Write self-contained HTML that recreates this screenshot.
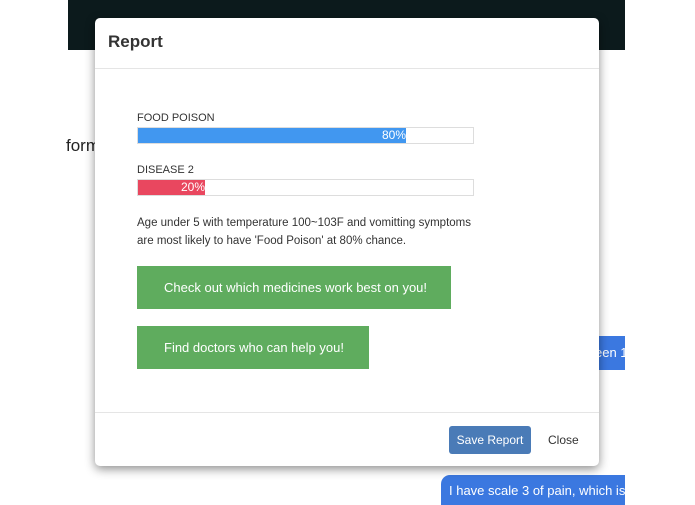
<!DOCTYPE html>
<html><head><style>
body{margin:0;width:695px;height:494px;overflow:hidden;background:#fff;font-family:"Liberation Sans","Noto Sans CJK KR",sans-serif;position:relative}
.hdr{position:absolute;left:68px;top:0;width:557px;height:50px;background:#0c1a1c}
.form{position:absolute;left:66px;top:136px;font-size:17px;color:#222;white-space:nowrap}
.b1{position:absolute;left:595px;top:336px;width:30px;height:34px;background:#3b78e0;color:#fff;font-size:13px;line-height:34px;overflow:hidden;white-space:nowrap;border-radius:3px 0 0 3px}
.b2{position:absolute;left:441px;top:475px;width:184px;height:30px;background:#3b78e0;color:#fff;font-size:13px;line-height:32px;overflow:hidden;white-space:nowrap;border-radius:9px 0 0 0;padding-left:8px;box-sizing:border-box}
.modal{position:absolute;left:95px;top:18px;width:504px;height:448px;background:#fff;border-radius:5px;box-shadow:0 3px 10px rgba(0,0,0,.45)}
.mh{height:50px;border-bottom:1px solid #e5e5e5;padding-left:13px;font-size:17px;font-weight:bold;color:#333;line-height:48px}
.lab{position:absolute;left:42px;font-size:11px;color:#333}
.bar{position:absolute;left:42px;width:337px;height:17px;border:1px solid #ddd;box-sizing:border-box}
.bar div{height:100%;color:#fff;font-size:12px;text-align:right;line-height:15px}
.txt{position:absolute;left:42px;top:196px;font-size:11.5px;color:#333;line-height:18px}
.g{position:absolute;left:42px;background:#5fac5e;color:#fff;font-size:13px;line-height:43px;padding-left:27px;box-sizing:border-box;height:43px}
.mf{position:absolute;left:0;right:0;top:394px;border-top:1px solid #e5e5e5}
.save{position:absolute;left:354px;top:408px;width:82px;height:28px;background:#4a7bb7;border-radius:3px;color:#fff;font-size:12px;line-height:28px;text-align:center}
.close{position:absolute;left:453px;top:408px;font-size:12px;color:#333;line-height:28px}
</style></head><body>
<div class="hdr"></div>
<div class="form">formation</div>
<div class="b1">een 1</div>
<div class="b2">I have scale 3 of pain, which is intense</div>
<div class="modal">
<div class="mh">Report</div>
<div class="lab" style="top:94px">FOOD POISON</div>
<div class="bar" style="top:109px"><div style="width:80%;background:#4197f0">80%</div></div>
<div class="lab" style="top:146px">DISEASE 2</div>
<div class="bar" style="top:161px"><div style="width:20%;background:#e9475f">20%</div></div>
<div class="txt">Age under 5 with temperature 100~103F and vomitting symptoms<br>are most likely to have 'Food Poison' at 80% chance.</div>
<div class="g" style="top:248px;width:314px">Check out which medicines work best on you!</div>
<div class="g" style="top:308px;width:232px">Find doctors who can help you!</div>
<div class="mf"></div>
<div class="save">Save Report</div>
<div class="close">Close</div>
</div>
</body></html>
